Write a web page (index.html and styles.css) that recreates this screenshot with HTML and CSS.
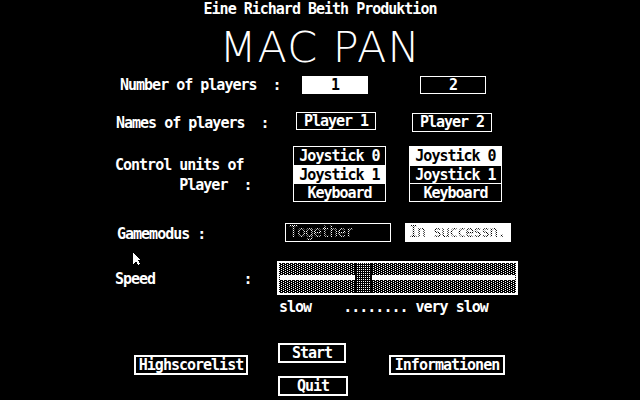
FILE: index.html
```html
<!doctype html>
<html lang="de">
  <head>
    <meta charset="UTF-8" />
    <meta name="viewport" content="width=device-width, initial-scale=1.0" />
    <title>MAC PAN - Optionen</title>
    <link rel="stylesheet" href="styles.css">
  </head>
  <body>
    <div class="screen">
      <div class="credit">Eine Richard Beith Produktion</div>
      <div class="logo">MAC PAN</div>

      <div class="row row-players">
        <div class="label">Number of players  :</div>
        <div class="box box-on">1</div>
        <div class="box">2</div>
      </div>

      <div class="row row-names">
        <div class="label">Names of players  :</div>
        <div class="box">Player 1</div>
        <div class="box box-tall">Player 2</div>
      </div>

      <div class="row row-control">
        <div class="label">Control units of
        Player  :</div>
        <div class="pick">
          <div class="opt">Joystick 0</div>
          <div class="opt on">Joystick 1</div>
          <div class="opt">Keyboard</div>
        </div>
        <div class="pick">
          <div class="opt on">Joystick 0</div>
          <div class="opt">Joystick 1</div>
          <div class="opt">Keyboard</div>
        </div>
      </div>

      <div class="row row-mode">
        <div class="label">Gamemodus :</div>
        <div class="box box-mode"><span class="dim">Together</span></div>
        <div class="box box-mode box-on"><span class="dim">In successn.</span></div>
      </div>

      <div class="row row-speed">
        <div class="label">Speed           :</div>
        <div class="speed">
          <svg class="slider" width="241" height="34" viewBox="0 0 241 34" shape-rendering="crispEdges">
            <defs>
              <pattern id="dots" width="4" height="2" patternUnits="userSpaceOnUse">
                <rect x="0" y="0" width="1" height="1" fill="#fff" />
                <rect x="2" y="1" width="1" height="1" fill="#fff" />
              </pattern>
              <pattern id="grain" width="2" height="2" patternUnits="userSpaceOnUse">
                <rect x="0" y="0" width="1" height="1" fill="#fff" />
              </pattern>
            </defs>
            <rect x="0" y="0" width="241" height="34" fill="#fff" />
            <rect x="2" y="2" width="237" height="30" fill="#000" />
            <rect x="2" y="2" width="237" height="30" fill="url(#dots)" />
            <rect x="3" y="14" width="235" height="5" fill="#fff" />
            <!-- thumb -->
            <rect x="78" y="2" width="17" height="30" fill="#000" />
            <rect x="80" y="2" width="13" height="30" fill="url(#grain)" />
          </svg>
          <div class="scale">slow    ........ very slow</div>
        </div>
      </div>

      <div class="row row-buttons">
        <div class="btn btn-high">Highscorelist</div>
        <div class="btn-stack">
          <div class="btn btn-start">Start</div>
          <div class="btn btn-quit">Quit</div>
        </div>
        <div class="btn btn-info">Informationen</div>
      </div>

      <svg class="cursor" width="9" height="12" viewBox="0 0 9 12" shape-rendering="crispEdges">
        <path d="M0 0 L0 11 L3 8 L5 12 L7 11 L5 7 L8 7 Z" fill="#fff" />
      </svg>
    </div>
  </body>
</html>
```

FILE: styles.css
```css
* {
  margin: 0;
  padding: 0;
  box-sizing: border-box;
}

body {
  background: #000;
}

.screen {
  position: relative;
  width: 640px;
  height: 400px;
  overflow: hidden;
  background: #000;
  color: #fff;
  font-family: 'DejaVu Sans Mono', monospace;
  font-size: 15px;
  font-weight: bold;
  letter-spacing: -1px;
}

.credit {
  padding-top: 1px;
  line-height: 16px;
  text-align: center;
}

.logo {
  margin-top: 8px;
  font-family: 'DejaVu Sans', sans-serif;
  font-size: 43px;
  font-weight: 200;
  line-height: 44px;
  letter-spacing: 1px;
  text-align: center;
}

.row {
  display: flex;
  align-items: flex-start;
}

.label {
  white-space: pre;
  line-height: 18px;
}

.box {
  height: 18px;
  border: 1px solid #fff;
  line-height: 16px;
  text-align: center;
  white-space: pre;
}

.box-on {
  background: #fff;
  color: #000;
}

/* number of players */
.row-players {
  margin-top: 7px;
  padding-left: 120px;
}

.row-players .label {
  width: 182px;
}

.row-players .box {
  width: 66px;
}

.row-players .box + .box {
  margin-left: 52px;
}

/* names */
.row-names {
  margin-top: 18px;
  padding-left: 116px;
  height: 20px;
}

.row-names .label {
  width: 180px;
  padding-top: 2px;
}

.row-names .box {
  width: 80px;
}

.row-names .box-tall {
  height: 19px;
  margin-top: 1px;
  margin-left: 36px;
  line-height: 17px;
}

/* control units */
.row-control {
  margin-top: 14px;
  padding-left: 115px;
}

.row-control .label {
  width: 178px;
  padding-top: 9px;
  line-height: 20px;
}

.pick {
  display: grid;
  grid-template-rows: 18px 17px 17px;
  gap: 1px;
  width: 93px;
  height: 56px;
  border: 1px solid #fff;
  background: #fff;
}

.pick + .pick {
  margin-left: 23px;
}

.opt {
  display: flex;
  align-items: center;
  justify-content: center;
  background: #000;
  color: #fff;
}

.opt.on {
  background: #fff;
  color: #000;
}

/* game mode */
.row-mode {
  margin-top: 21px;
  padding-left: 117px;
}

.row-mode .label {
  width: 168px;
  padding-top: 2px;
}

.box-mode {
  width: 106px;
  height: 19px;
  line-height: 17px;
  padding-left: 3px;
  text-align: left;
}

.box-mode + .box-mode {
  margin-left: 14px;
}

/* disabled entries are drawn dithered */
.dim {
  font-weight: normal;
  color: transparent;
  background: repeating-conic-gradient(#fff 0 25%, #000 0 50%) 0 0 / 2px 2px;
  -webkit-background-clip: text;
  background-clip: text;
}

/* speed */
.row-speed {
  margin-top: 18px;
  padding-left: 115px;
}

.row-speed .label {
  width: 162px;
  padding-top: 8px;
  line-height: 20px;
}

.slider {
  display: block;
}

.scale {
  margin-top: 4px;
  padding-left: 2px;
  line-height: 16px;
  white-space: pre;
}

/* buttons */
.row-buttons {
  margin-top: 28px;
  padding-left: 134px;
}

.btn {
  height: 20px;
  border: 2px solid #fff;
  line-height: 16px;
  text-align: center;
}

.btn-high {
  width: 114px;
  margin-top: 12px;
}

.btn-stack {
  display: flex;
  flex-direction: column;
  gap: 13px;
  margin-left: 30px;
}

.btn-start {
  width: 68px;
}

.btn-quit {
  width: 70px;
}

.btn-info {
  width: 116px;
  margin-top: 12px;
  margin-left: 41px;
}

.cursor {
  position: absolute;
  left: 133px;
  top: 253px;
}
```
